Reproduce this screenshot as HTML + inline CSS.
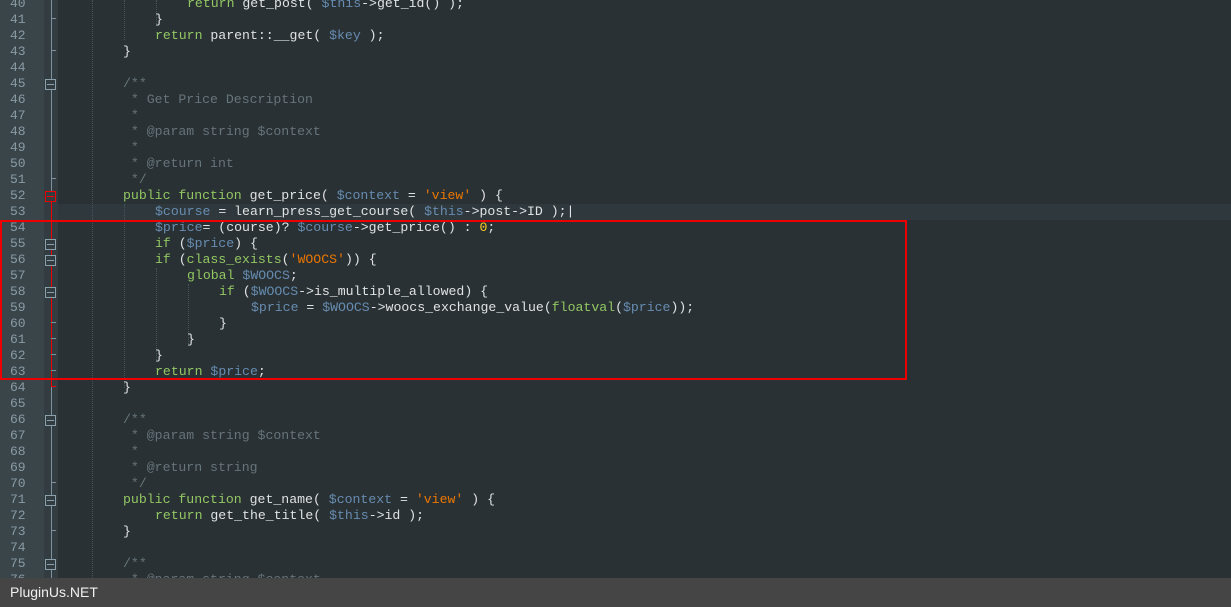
<!DOCTYPE html>
<html><head><meta charset="utf-8"><style>
html,body{margin:0;padding:0;width:1231px;height:607px;overflow:hidden;background:#293134}
#g1{position:absolute;left:0;top:0;width:44px;height:607px;background:#3a454a}
#g2{position:absolute;left:44px;top:0;width:14px;height:607px;background:#323c41}
.l{position:absolute;left:0;height:16px;width:1231px;font:13.2px/16px "Liberation Mono",monospace;color:#e0e2e4;white-space:pre}
.n{position:absolute;left:10px;color:#8a9ba5;font-size:13px}
.c{position:absolute}
.k{color:#93c763}.v{color:#678cb1}.s{color:#ec7600}.m{color:#66747b}.num{color:#ffcd22}
.fb{position:absolute;z-index:5;left:45px;width:11px;height:11px;border:1px solid #8aa0aa;box-sizing:border-box;background:#323c41}
.fb::after{content:"";position:absolute;left:1px;top:4px;width:7px;height:1px;background:#8aa0aa}
.vl{position:absolute;left:51px;width:1px;background:#7d929c}
.tk{position:absolute;left:51px;width:5px;height:1px;background:#7d929c}
.gd{position:absolute;top:0;height:578px;border-left:1px dotted #45535a}
#foot{position:absolute;z-index:9;left:0;top:578px;width:1231px;height:29px;background:#454545;color:#f0f0f0;font:14px/29px "Liberation Sans",sans-serif;padding-left:10px;box-sizing:border-box}
#box{position:absolute;left:0;top:220px;width:907px;height:160px;border:2px solid #e00;box-sizing:border-box}
#cur{position:absolute;left:58px;top:204px;width:1173px;height:16px;background:#2f393d}
</style></head><body>
<div id="g1"></div><div id="g2"></div>
<div id="cur"></div>
<div class="gd" style="left:92px"></div><div class="gd" style="left:124px;top:0;height:40px"></div><div class="gd" style="left:156px;top:0;height:24px"></div>
<div class="gd" style="left:124px;top:204px;height:184px"></div><div class="gd" style="left:156px;top:268px;height:92px"></div><div class="gd" style="left:188px;top:284px;height:60px"></div>
<div class="vl" style="top:0;height:578px"></div>
<div class="vl" style="top:198px;height:188px;background:#e00"></div>
<div class="tk" style="top:18px"></div><div class="tk" style="top:50px"></div><div class="tk" style="top:178px"></div>
<div class="tk" style="top:322px"></div><div class="tk" style="top:338px"></div><div class="tk" style="top:354px"></div><div class="tk" style="top:370px"></div>
<div class="tk" style="top:386px;background:#e00"></div><div class="tk" style="top:482px"></div><div class="tk" style="top:530px"></div>
<div class="fb" style="top:79px"></div>
<div style="position:absolute;z-index:6;left:45px;top:191px;width:11px;height:11px;border:1px solid #e00;box-sizing:border-box;background:#323c41"><div style="position:absolute;left:1px;top:4px;width:7px;height:1px;background:#e00"></div></div>
<div class="fb" style="top:239px"></div><div class="fb" style="top:255px"></div><div class="fb" style="top:287px"></div><div class="fb" style="top:415px"></div><div class="fb" style="top:495px"></div><div class="fb" style="top:559px"></div>

<div class="l" style="top:-4px"><span class="n">40</span><span class="c" style="left:187px"><span class="k">return</span> get_post( <span class="v">$this</span>-&gt;get_id() );</span></div>
<div class="l" style="top:12px"><span class="n">41</span><span class="c" style="left:155px">}</span></div>
<div class="l" style="top:28px"><span class="n">42</span><span class="c" style="left:155px"><span class="k">return</span> parent::__get( <span class="v">$key</span> );</span></div>
<div class="l" style="top:44px"><span class="n">43</span><span class="c" style="left:123px">}</span></div>
<div class="l" style="top:60px"><span class="n">44</span></div>
<div class="l" style="top:76px"><span class="n">45</span><span class="c m" style="left:123px">/**</span></div>
<div class="l" style="top:92px"><span class="n">46</span><span class="c m" style="left:123px"> * Get Price Description</span></div>
<div class="l" style="top:108px"><span class="n">47</span><span class="c m" style="left:123px"> *</span></div>
<div class="l" style="top:124px"><span class="n">48</span><span class="c m" style="left:123px"> * @param string $context</span></div>
<div class="l" style="top:140px"><span class="n">49</span><span class="c m" style="left:123px"> *</span></div>
<div class="l" style="top:156px"><span class="n">50</span><span class="c m" style="left:123px"> * @return int</span></div>
<div class="l" style="top:172px"><span class="n">51</span><span class="c m" style="left:123px"> */</span></div>
<div class="l" style="top:188px"><span class="n">52</span><span class="c" style="left:123px"><span class="k">public function</span> get_price( <span class="v">$context</span> = <span class="s">'view'</span> ) {</span></div>
<div class="l" style="top:204px"><span class="n">53</span><span class="c" style="left:155px"><span class="v">$course</span> = learn_press_get_course( <span class="v">$this</span>-&gt;post-&gt;ID );|</span></div>
<div class="l" style="top:220px"><span class="n">54</span><span class="c" style="left:155px"><span class="v">$price</span>= (course)? <span class="v">$course</span>-&gt;get_price() : <span class="num">0</span>;</span></div>
<div class="l" style="top:236px"><span class="n">55</span><span class="c" style="left:155px"><span class="k">if</span> (<span class="v">$price</span>) {</span></div>
<div class="l" style="top:252px"><span class="n">56</span><span class="c" style="left:155px"><span class="k">if</span> (<span class="k">class_exists</span>(<span class="s">'WOOCS'</span>)) {</span></div>
<div class="l" style="top:268px"><span class="n">57</span><span class="c" style="left:187px"><span class="k">global</span> <span class="v">$WOOCS</span>;</span></div>
<div class="l" style="top:284px"><span class="n">58</span><span class="c" style="left:219px"><span class="k">if</span> (<span class="v">$WOOCS</span>-&gt;is_multiple_allowed) {</span></div>
<div class="l" style="top:300px"><span class="n">59</span><span class="c" style="left:251px"><span class="v">$price</span> = <span class="v">$WOOCS</span>-&gt;woocs_exchange_value(<span class="k">floatval</span>(<span class="v">$price</span>));</span></div>
<div class="l" style="top:316px"><span class="n">60</span><span class="c" style="left:219px">}</span></div>
<div class="l" style="top:332px"><span class="n">61</span><span class="c" style="left:187px">}</span></div>
<div class="l" style="top:348px"><span class="n">62</span><span class="c" style="left:155px">}</span></div>
<div class="l" style="top:364px"><span class="n">63</span><span class="c" style="left:155px"><span class="k">return</span> <span class="v">$price</span>;</span></div>
<div class="l" style="top:380px"><span class="n">64</span><span class="c" style="left:123px">}</span></div>
<div class="l" style="top:396px"><span class="n">65</span></div>
<div class="l" style="top:412px"><span class="n">66</span><span class="c m" style="left:123px">/**</span></div>
<div class="l" style="top:428px"><span class="n">67</span><span class="c m" style="left:123px"> * @param string $context</span></div>
<div class="l" style="top:444px"><span class="n">68</span><span class="c m" style="left:123px"> *</span></div>
<div class="l" style="top:460px"><span class="n">69</span><span class="c m" style="left:123px"> * @return string</span></div>
<div class="l" style="top:476px"><span class="n">70</span><span class="c m" style="left:123px"> */</span></div>
<div class="l" style="top:492px"><span class="n">71</span><span class="c" style="left:123px"><span class="k">public function</span> get_name( <span class="v">$context</span> = <span class="s">'view'</span> ) {</span></div>
<div class="l" style="top:508px"><span class="n">72</span><span class="c" style="left:155px"><span class="k">return</span> get_the_title( <span class="v">$this</span>-&gt;id );</span></div>
<div class="l" style="top:524px"><span class="n">73</span><span class="c" style="left:123px">}</span></div>
<div class="l" style="top:540px"><span class="n">74</span></div>
<div class="l" style="top:556px"><span class="n">75</span><span class="c m" style="left:123px">/**</span></div>
<div class="l" style="top:572px"><span class="n">76</span><span class="c m" style="left:123px"> * @param string $context</span></div>
<div id="box"></div>
<div id="foot">PluginUs.NET</div>
</body></html>
